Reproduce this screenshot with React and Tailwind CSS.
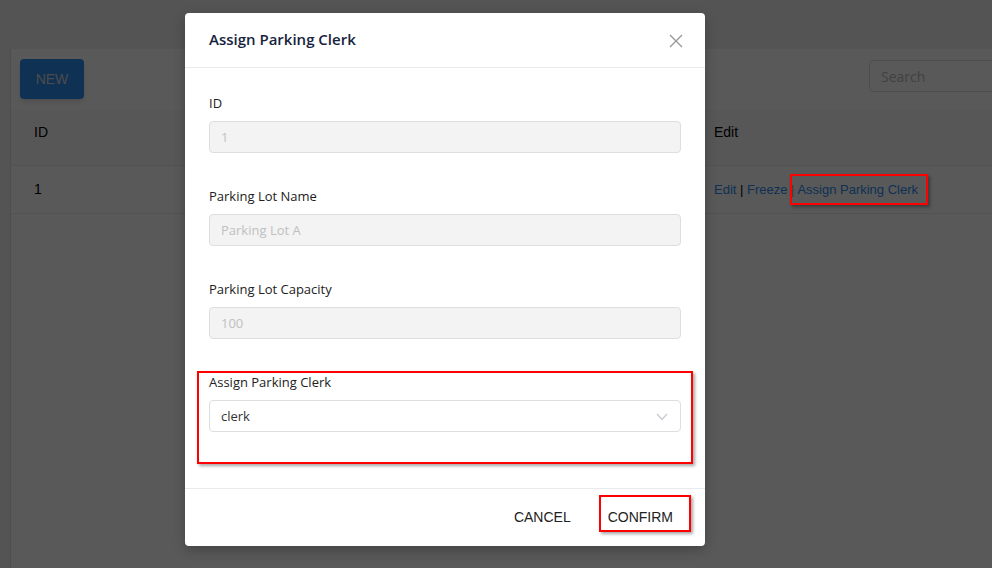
import React from "react";

const sans = "font-['Open_Sans',sans-serif]";
const arial = "font-['Liberation_Sans',Arial,sans-serif]";

function Field({ label, value }) {
  return (
    <div className="mb-[32px]">
      <div className={`${sans} text-[13px] leading-[22px] text-[#222] mb-[7px]`}>{label}</div>
      <div className={`${sans} h-[32px] rounded-[4px] border border-[#dcdee2] bg-[#f3f3f3] px-[11px] pt-[2px] flex items-center text-[13px] text-[#c0c0c0]`}>
        {value}
      </div>
    </div>
  );
}

function RedBox({ className }) {
  return (
    <div
      className={`absolute border-2 border-[#ff0000] shadow-[2px_2px_3px_rgba(0,0,0,0.35)] ${className}`}
    />
  );
}

export default function App() {
  return (
    <div className={`relative w-[992px] h-[568px] overflow-hidden bg-[#f0f0f0] ${arial}`}>
      {/* Underlying page */}
      <div className="pt-[49px] pl-[10px]">
        <div className="w-[1100px] h-[600px] bg-white border-l border-[#e0e0e0]">
          <div className="flex items-start justify-between h-[61px] pl-[9px] pt-[10px]">
            <button className="h-[40px] w-[64px] rounded-[4px] bg-[#2d8cf0] text-[#d8d8d8] text-[14px] shadow-md">NEW</button>
            <div className="mt-[1px] mr-[41px] w-[200px] h-[32px] rounded-[4px] border border-[#dcdee2] bg-white flex items-center px-[11px] text-[14px] text-[#bbb] font-['Open_Sans',sans-serif]">
              Search
            </div>
          </div>
          <div className="flex h-[56px] border-b border-[#e8eaec] text-[14px] text-black bg-[#fafafa]">
            <div className="w-[679px] pl-[23px] pt-[12px]">ID</div>
            <div className="pl-[24px] pt-[12px]">Edit</div>
          </div>
          <div className="flex h-[48px] items-center border-b border-[#e8eaec] text-[13px] text-black">
            <div className="w-[679px] pl-[23px] text-[14px]">1</div>
            <div className="pl-[24px]">
              <span className="text-[#2d8cf0]">Edit</span> | <span className="text-[#2d8cf0]">Freeze</span>
              <span className="text-[#aaa]"> | </span>
              <span className="text-[#2d8cf0]">Assign Parking Clerk</span>
            </div>
          </div>
        </div>
      </div>

      {/* Mask */}
      <div className="absolute inset-0 bg-black/65" />

      {/* Modal */}
      <div className="absolute left-[185px] top-[13px] w-[520px] rounded-[4px] bg-white shadow-[0_4px_12px_rgba(0,0,0,0.25)]">
        <div className="h-[55px] border-b border-[#e8eaec] flex items-center justify-between pl-[24px] pr-[22px]">
          <div className={`${sans} text-[15px] font-semibold text-[#17233d] pb-[1px]`}>Assign Parking Clerk</div>
          <svg width="14" height="14" viewBox="0 0 14 14" className="mt-[1px]">
            <path d="M1 1 L13 13 M13 1 L1 13" stroke="#999" strokeWidth="1.4" fill="none" />
          </svg>
        </div>
        <div className="px-[24px] pt-[24px] pb-[24px]">
          <Field label="ID" value="1" />
          <Field label="Parking Lot Name" value="Parking Lot A" />
          <Field label="Parking Lot Capacity" value="100" />
          <div className="mb-[32px]">
            <div className={`${sans} text-[13px] leading-[22px] text-[#222] mb-[7px]`}>Assign Parking Clerk</div>
            <div className={`${sans} h-[32px] rounded-[4px] border border-[#dcdee2] bg-white pl-[11px] pr-[12px] pt-[2px] flex items-center justify-between text-[13px] text-[#333]`}>
              <span>clerk</span>
              <svg width="12" height="8" viewBox="0 0 12 8">
                <path d="M1 1 L6 6.5 L11 1" stroke="#c5c8ce" strokeWidth="1.2" fill="none" />
              </svg>
            </div>
          </div>
        </div>
        <div className="border-t border-[#e8eaec] h-[58px] flex items-center justify-end pr-[16px] gap-[5px]">
          <button className={`${arial} h-[32px] px-[16px] text-[14px] text-[#222]`}>CANCEL</button>
          <button className={`${arial} h-[32px] px-[16px] text-[14px] text-[#222]`}>CONFIRM</button>
        </div>
      </div>

      {/* Annotations */}
      <RedBox className="left-[790px] top-[174px] w-[138px] h-[31px]" />
      <RedBox className="left-[197px] top-[371px] w-[496px] h-[93px]" />
      <RedBox className="left-[599px] top-[495px] w-[92px] h-[37px]" />
    </div>
  );
}
